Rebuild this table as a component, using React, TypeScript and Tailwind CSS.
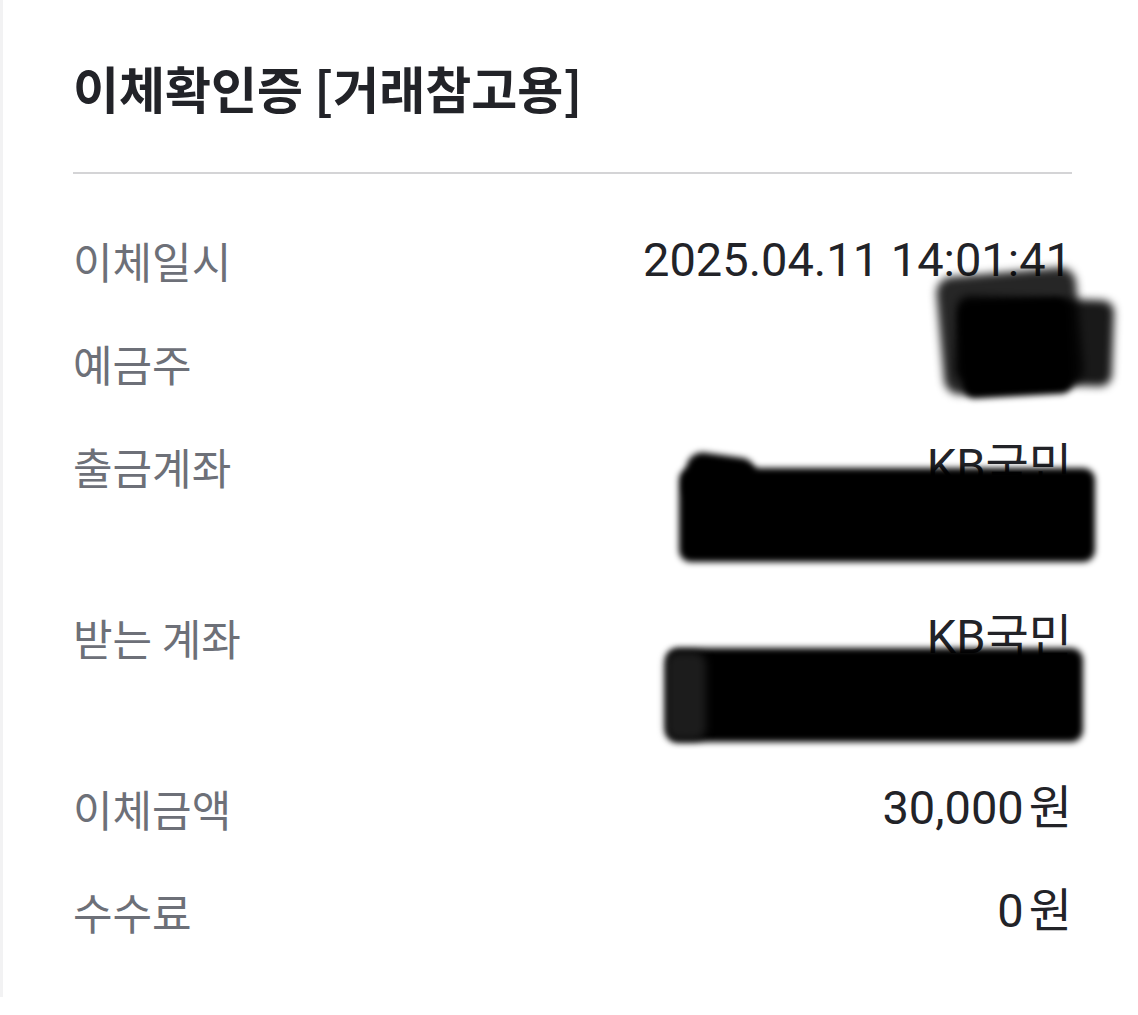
import React from 'react';

interface Row {
  label: string;
  lines: React.ReactNode[];
}

const rows: Row[] = [
  { label: '이체일시', lines: ['2025.04.11 14:01:41'] },
  { label: '예금주', lines: [''] },
  { label: '출금계좌', lines: ['KB국민', ''] },
  { label: '받는 계좌', lines: ['KB국민', ''] },
  {
    label: '이체금액',
    lines: [
      <span key="a">
        30,000<span className="ml-[5px]">원</span>
      </span>,
    ],
  },
  {
    label: '수수료',
    lines: [
      <span key="b">
        0<span className="ml-[5px]">원</span>
      </span>,
    ],
  },
];

// hand-drawn marker redactions sitting over the private values
function Redactions() {
  return (
    <>
      <div className="absolute left-[937px] top-[272px] w-[140px] h-[118px] bg-black/85 rounded-2xl blur-[4px] -rotate-[5deg]" />
      <div className="absolute left-[953px] top-[298px] w-[157px] h-[86px] bg-black/90 rounded-xl blur-[4px] rotate-[2deg]" />
      <div className="absolute left-[958px] top-[300px] w-[110px] h-[96px] bg-black rounded-xl blur-[3px] -rotate-[3deg]" />

      <div className="absolute left-[676px] top-[468px] w-[416px] h-[94px] bg-black rounded-xl blur-[3px]" />
      <div className="absolute left-[682px] top-[455px] w-[70px] h-[50px] bg-black rounded-2xl blur-[3px] rotate-[8deg]" />

      <div className="absolute left-[663px] top-[648px] w-[417px] h-[94px] bg-black rounded-xl blur-[3px]" />
      <div className="absolute left-[663px] top-[652px] w-[40px] h-[88px] bg-[#1c1c1c] rounded-xl blur-[4px]" />
    </>
  );
}

export default function App() {
  return (
    <div className="w-[1138px] h-[1015px] bg-white">
      <div className="relative h-[997px] border-l-[3px] border-[#f2f2f3] pl-[70px] pr-[66px] pt-[57px]">
        <h1
          className="text-[50px] leading-[60px] font-bold text-[#222328]"
          style={{ fontFamily: '"Noto Sans CJK KR", "Noto Sans", sans-serif' }}
        >
          이체확인증 [거래참고용]
        </h1>

        <div className="mt-[55px] h-[2px] bg-[#d4d4d6]" />

        <div className="mt-[52px] flex flex-col gap-[35px]">
          {rows.map((row) => (
            <div key={row.label} className="flex justify-between items-start">
              <div
                className="text-[43px] leading-[68px] text-[#6d7078]"
                style={{ fontFamily: '"Noto Sans CJK KR", sans-serif' }}
              >
                {row.label}
              </div>
              <div
                className="text-right text-[47px] leading-[68px] text-[#222328]"
                style={{ fontFamily: 'Roboto, "Noto Sans CJK KR", sans-serif' }}
              >
                {row.lines.map((line, i) => (
                  <div key={i} className="h-[68px]">
                    {line}
                  </div>
                ))}
              </div>
            </div>
          ))}
        </div>

        <Redactions />
      </div>
    </div>
  );
}
